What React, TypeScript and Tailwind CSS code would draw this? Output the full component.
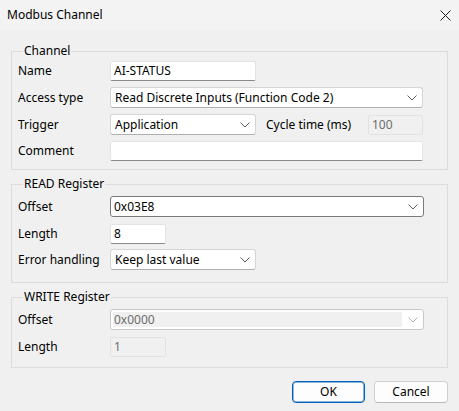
import React from 'react';

const font = { fontFamily: '"Segoe UI", "Noto Sans", "Liberation Sans", sans-serif' };

const Chevron = ({ dim }: { dim?: boolean }) => (
  <svg width="10" height="6" viewBox="0 0 10 6" className="shrink-0">
    <path d="M0.5 0.5 L5 5 L9.5 0.5" fill="none" stroke={dim ? '#b4b4b4' : '#5f5f5f'} strokeWidth="1" />
  </svg>
);

const TextBox = ({ value, width, disabled }: { value: string; width: string; disabled?: boolean }) => (
  <div
    className={
      disabled
        ? `${width} h-[20px] flex items-center pl-[3px] bg-[#f0f0f0] border border-[#e2e2e2] rounded-[2px] text-[#6d6d6d]`
        : `${width} h-[20px] flex items-center pl-[3px] bg-white border border-[#e3e3e3] border-b-[#8a8a8a] rounded-[2px] text-black`
    }
  >
    {value}
  </div>
);

const Select = ({ value, width, focused }: { value: string; width: string; focused?: boolean }) => (
  <div
    className={
      focused
        ? `${width} h-[21px] flex items-center justify-between pl-[3px] pr-[5px] bg-white border border-[#7a7a7a] rounded-[3px]`
        : `${width} h-[21px] flex items-center justify-between pl-[4px] pr-[5px] bg-white border border-[#d5d5d5] border-b-[#b0b0b0] rounded-[3px]`
    }
  >
    <span>{value}</span>
    <Chevron />
  </div>
);

const DisabledSelect = ({ value }: { value: string }) => (
  <div className="w-[314px] h-[21px] flex items-center bg-white border border-[#c8c8c8] rounded-[3px] p-[2px]">
    <div className="flex-1 h-full bg-[#f0f0f0] flex items-center pl-[1px] text-[#6d6d6d]">{value}</div>
    <div className="w-[19px] flex justify-center pl-[2px]">
      <Chevron dim />
    </div>
  </div>
);

const Row = ({ label, children, className = '' }: { label: string; children: React.ReactNode; className?: string }) => (
  <div className={`flex items-center ${className}`}>
    <div className="w-[92px] shrink-0">{label}</div>
    {children}
  </div>
);

const Group = ({ title, children, className = '' }: { title: string; children: React.ReactNode; className?: string }) => (
  <fieldset className={`border border-[#dcdcdc] pl-[6px] ${className}`}>
    <legend className="px-[1px] ml-[5px] leading-[16px]">{title}</legend>
    {children}
  </fieldset>
);

export default function App() {
  return (
    <div className="w-[459px] h-[411px] bg-[#f0f0f0] text-[12px] text-black overflow-hidden" style={font}>
      <div className="h-[30px] bg-[#f3f3f3] flex items-center justify-between pl-[7px] pr-[8px]">
        <span className="text-[12px] leading-none">Modbus Channel</span>
        <svg width="11" height="11" viewBox="0 0 11 11">
          <path d="M0.5 0.5 L10.5 10.5 M10.5 0.5 L0.5 10.5" stroke="#1a1a1a" strokeWidth="1" />
        </svg>
      </div>

      <div className="px-[11px]">
        <Group title="Channel" className="mt-[13px] pt-[2px] pb-[8px]">
          <div className="flex flex-col gap-[6px]">
            <Row label="Name">
              <TextBox value="AI-STATUS" width="w-[146px]" />
            </Row>
            <Row label="Access type">
              <Select value="Read Discrete Inputs (Function Code 2)" width="w-[313px]" />
            </Row>
            <Row label="Trigger">
              <Select value="Application" width="w-[146px]" />
              <span className="ml-[10px] w-[102px]">Cycle time (ms)</span>
              <TextBox value="100" width="w-[55px]" disabled />
            </Row>
            <Row label="Comment">
              <TextBox value="" width="w-[313px]" />
            </Row>
          </div>
        </Group>

        <Group title="READ Register" className="mt-[6px] pt-[4px] pb-[12px]">
          <Row label="Offset">
            <Select value="0x03E8" width="w-[314px]" focused />
          </Row>
          <Row label="Length" className="mt-[7px]">
            <TextBox value="8" width="w-[56px]" />
          </Row>
          <Row label="Error handling" className="mt-[5px]">
            <Select value="Keep last value" width="w-[146px]" />
          </Row>
        </Group>

        <Group title="WRITE Register" className="mt-[6px] pt-[4px] pb-[10px]">
          <Row label="Offset">
            <DisabledSelect value="0x0000" />
          </Row>
          <Row label="Length" className="mt-[7px]">
            <TextBox value="1" width="w-[56px]" disabled />
          </Row>
        </Group>

        <div className="flex justify-end gap-[9px] mt-[13px]">
          <button className="w-[73px] h-[22px] bg-[#fdfdfd] border border-[#005fb8] shadow-[inset_0_0_0_1px_rgba(0,95,184,0.45)] rounded-[4px] flex items-center justify-center">
            OK
          </button>
          <button className="w-[74px] h-[22px] bg-[#fdfdfd] border border-[#d0d0d0] border-b-[#b8b8b8] rounded-[4px] flex items-center justify-center">
            Cancel
          </button>
        </div>
      </div>
    </div>
  );
}
